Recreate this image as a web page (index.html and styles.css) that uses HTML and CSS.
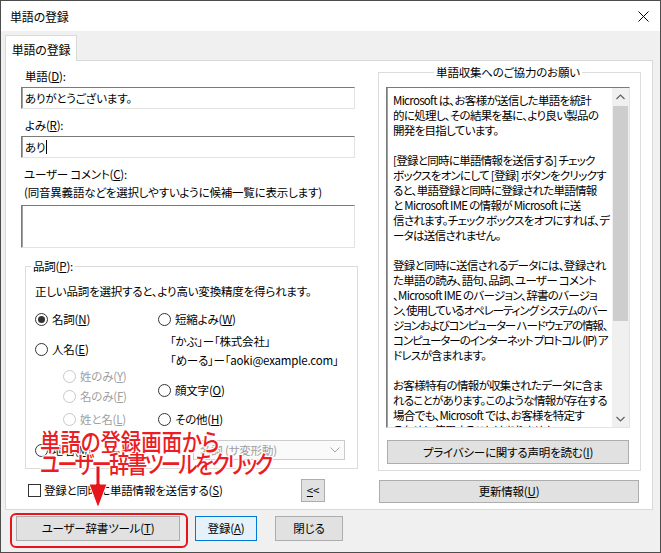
FILE: index.html
```html
<!DOCTYPE html>
<html lang="ja">
<head>
<meta charset="utf-8">
<title>単語の登録</title>
<link rel="stylesheet" href="styles.css">
</head>
<body>
<div class="window">
  <div class="titlebar">
    <span class="title">単語の登録</span>
    <svg class="close" width="11" height="11" viewBox="0 0 11 11"><path d="M0.5 0.5L10.5 10.5M10.5 0.5L0.5 10.5" stroke="#000" stroke-width="1" fill="none"/></svg>
  </div>
  <div class="client">
    <div class="tabs"><div class="tab">単語の登録</div></div>
    <div class="panel">
      <div class="left">
        <div class="label first">単語(<u>D</u>):</div>
        <div class="sunken input">ありがとうございます。</div>
        <div class="label">よみ(<u>R</u>):</div>
        <div class="sunken input">あり<span class="caret"></span></div>
        <div class="comment-label">ユーザー コメント(<u>C</u>):<br>(同音異義語などを選択しやすいように候補一覧に表示します)</div>
        <div class="sunken textarea"></div>
        <fieldset class="group pos">
          <legend class="legend-left">品詞(<u>P</u>):</legend>
          <div class="hint">正しい品詞を選択すると、より高い変換精度を得られます。</div>
          <div class="pos-grid">
            <div class="col">
              <div class="radio"><span class="circle checked"></span><span>名詞(<u>N</u>)</span></div>
              <div class="radio gap10"><span class="circle"></span><span>人名(<u>E</u>)</span></div>
              <div class="radio sub disabled gap7"><span class="circle"></span><span>姓のみ(<u>Y</u>)</span></div>
              <div class="radio sub disabled"><span class="circle"></span><span>名のみ(<u>F</u>)</span></div>
              <div class="radio sub disabled gap3"><span class="circle"></span><span>姓と名(<u>L</u>)</span></div>
            </div>
            <div class="col">
              <div class="radio"><span class="circle"></span><span>短縮よみ(<u>W</u>)</span></div>
              <div class="examples">「かぶ」ー「株式会社」<br>「めーる」ー「aoki@example.com」</div>
              <div class="radio gap10"><span class="circle"></span><span>顔文字(<u>O</u>)</span></div>
              <div class="radio gap9"><span class="circle"></span><span>その他(<u>H</u>)</span></div>
            </div>
            <div class="col row-last">
              <div class="radio"><span class="circle"></span><span>地名(<u>M</u>)</span></div>
            </div>
            <div class="col row-last">
              <div class="select">
                <span>名詞 (サ変形動)</span>
                <svg width="10" height="6" viewBox="0 0 10 6"><path d="M0.5 0.5L5 5L9.5 0.5" stroke="#a8a8a8" fill="none"/></svg>
              </div>
            </div>
          </div>
        </fieldset>
        <div class="send-row">
          <span class="checkbox"></span>
          <span class="send-label">登録と同時に単語情報を送信する(<u>S</u>)</span>
          <button class="btn small"><u>&lt;</u>&lt;</button>
        </div>
      </div>
      <div class="right">
        <fieldset class="group info">
          <legend class="legend-center">単語収集へのご協力のお願い</legend>
          <div class="sunken infobox">
            <div class="infotext">Microsoft は、お客様が送信した単語を統計<br>的に処理し、その結果を基に、より良い製品の<br>開発を目指しています。<br><br>[登録と同時に単語情報を送信する] チェック<br>ボックスをオンにして [登録] ボタンをクリックす<br>ると、単語登録と同時に登録された単語情報<br>と Microsoft IME の情報が Microsoft に送<br>信されます。チェック ボックスをオフにすれば、デ<br>ータは送信されません。<br><br>登録と同時に送信されるデータには、登録され<br>た単語の読み、語句、品詞、ユーザー コメント<br>、Microsoft IME のバージョン、辞書のバージョ<br><span class="tight">ン、使用しているオペレーティング システムのバー</span><br><span class="tight">ジョンおよびコンピューター ハードウェアの情報、</span><br><span class="tight">コンピューターのインターネット プロトコル (IP) ア</span><br>ドレスが含まれます。<br><br>お客様特有の情報が収集されたデータに含ま<br>れることがあります。このような情報が存在する<br>場合でも、Microsoft では、お客様を特定す<br>るために使用することはありません。</div>
            <div class="scrollbar">
              <div class="arrow"><svg width="9" height="6" viewBox="0 0 9 6"><path d="M0.5 5L4.5 1L8.5 5" stroke="#606060" stroke-width="1.2" fill="none"/></svg></div>
              <div class="track"><div class="thumb"></div></div>
              <div class="arrow"><svg width="9" height="6" viewBox="0 0 9 6"><path d="M0.5 1L4.5 5L8.5 1" stroke="#606060" stroke-width="1.2" fill="none"/></svg></div>
            </div>
          </div>
          <button class="btn privacy">プライバシーに関する声明を読む(<u>I</u>)</button>
        </fieldset>
        <button class="btn update">更新情報(<u>U</u>)</button>
      </div>
    </div>
    <div class="footer">
      <button class="btn foot tool">ユーザー辞書ツール(<u>T</u>)</button>
      <button class="btn foot default">登録(<u>A</u>)</button>
      <button class="btn foot close-btn">閉じる</button>
    </div>
  </div>

  <div class="note">単語の登録画面から<br><span class="note-2">ユーザー辞書ツールをクリック</span></div>
  <svg class="note-arrow" width="24" height="46" viewBox="0 0 24 46"><path d="M8 1H12V19H19L10 43L1 19H8Z" fill="#e8141b" stroke="#fff" stroke-width="1"/></svg>
  <div class="note-box"></div>
</div>
</body>
</html>
```

FILE: styles.css
```css
* { box-sizing: border-box; }
html, body { margin: 0; padding: 0; }
body {
  width: 661px;
  height: 553px;
  overflow: hidden;
  background: #fff;
  color: #000;
  font-family: "Noto Sans CJK JP", "Noto Sans CJK SC", sans-serif;
  font-size: 11.5px;
  letter-spacing: -0.2px;
  line-height: 15px;
  font-feature-settings: "palt";
}
u { text-decoration: underline; text-underline-offset: 1px; }

.window {
  position: relative;
  width: 661px;
  height: 553px;
  border: 1px solid #4d4d4d;
  background: #f0f0f0;
  display: flex;
  flex-direction: column;
  overflow: hidden;
}
.titlebar {
  flex: none;
  height: 30px;
  background: #fff;
  display: flex;
  align-items: center;
  justify-content: space-between;
  padding: 0 11px 0 9px;
}
.title { font-size: 12px; }
.client {
  flex: 1;
  padding: 4px 7px 0 4px;
  display: flex;
  flex-direction: column;
}
.tabs { display: flex; height: 26px; position: relative; z-index: 1; margin-bottom: -1px; }
.tab {
  width: 72px;
  height: 26px;
  background: #fff;
  border: 1px solid #d9d9d9;
  border-bottom: none;
  display: flex;
  align-items: center;
  justify-content: center;
  padding-top: 1px;
  font-size: 12px;
}
.panel {
  height: 450px;
  background: #fff;
  border: 1px solid #d9d9d9;
  display: flex;
  padding: 0 10px 0 15px;
}
.left { width: 337px; display: flex; flex-direction: column; }
.right { width: 263px; margin-left: 20px; display: flex; flex-direction: column; }

.label { margin-top: 9px; padding-left: 4px; }
.label.first { margin-top: 8px; }
.sunken {
  background: #fff;
  border-style: solid;
  border-width: 1px;
  border-color: #7a7a7a #e3e3e3 #e3e3e3 #7a7a7a;
  box-shadow: inset 1px 0 0 #a0a0a0;
}
.input {
  width: 334px;
  height: 22px;
  margin-top: 3px;
  padding: 3px 3px 0 3px;
}
.caret { display: inline-block; width: 1px; height: 14px; background: #000; vertical-align: -2px; margin-left: 1px; }
.comment-label { margin-top: 7px; line-height: 18px; padding-left: 3px; }
.textarea { width: 334px; height: 43px; margin-top: 4px; }

.group {
  margin: 0;
  border: 1px solid #dcdcdc;
  min-width: 0;
}
.group legend { padding: 0 2px; line-height: 15px; }
.legend-left { margin-left: -4px; }
.legend-center { margin: 0 auto; padding: 0 3px; }

.pos {
  margin: 11px 0 0 4px;
  width: 333px;
  padding: 10px 8px 8px 9px;
}
.pos-grid {
  margin-top: 10px;
  display: grid;
  grid-template-columns: 123px 1fr;
}
.col { display: flex; flex-direction: column; }
.row-last { margin-top: 11px; }
.radio { height: 20px; display: flex; align-items: center; gap: 4px; white-space: nowrap; }
.gap10 { margin-top: 10px; }
.gap9 { margin-top: 9px; }
.gap7 { margin-top: 7px; }
.gap3 { margin-top: 3px; }
.circle {
  width: 13px;
  height: 13px;
  border: 1px solid #333;
  border-radius: 50%;
  background: #fff;
  display: flex;
  align-items: center;
  justify-content: center;
  flex: none;
}
.circle.checked::after {
  content: "";
  width: 7px;
  height: 7px;
  border-radius: 50%;
  background: #333;
}
.sub { margin-left: 28px; }
.disabled { color: #a0a0a0; }
.disabled .circle { border-color: #c8c8c8; }
.examples { margin-top: 3px; padding-left: 12px; line-height: 19px; white-space: nowrap; }
.select {
  margin-left: 35px;
  width: 152px;
  height: 20px;
  border: 1px solid #cccccc;
  background: #fafafa;
  color: #a0a0a0;
  display: flex;
  align-items: center;
  justify-content: space-between;
  padding: 0 4px 0 6px;
}

.send-row {
  margin-top: 10px;
  height: 23px;
  display: flex;
  align-items: center;
}
.checkbox {
  width: 13px;
  height: 13px;
  border: 1px solid #333;
  background: #fff;
  margin-left: 7px;
  flex: none;
}
.send-label { margin-left: 3px; }
.btn {
  font: inherit;
  letter-spacing: inherit;
  font-feature-settings: "palt";
  color: #000;
  background: #e1e1e1;
  border: 1px solid #adadad;
  padding: 0;
  margin: 0;
  display: flex;
  align-items: center;
  justify-content: center;
}
.small { width: 24px; height: 23px; margin-left: auto; margin-right: 33px; }

.info { margin-top: 4px; padding: 7px 10px 6px 7px; }
.infobox {
  height: 341px;
  display: flex;
  overflow: hidden;
}
.infotext {
  flex: 1;
  padding: 5px 0 0 6px;
  white-space: nowrap;
  overflow: hidden;
  line-height: 15px;
  letter-spacing: -0.7px;
}
.tight { letter-spacing: -1.1px; }
.scrollbar {
  width: 17px;
  flex: none;
  background: #f0f0f0;
  display: flex;
  flex-direction: column;
}
.arrow { height: 17px; display: flex; align-items: center; justify-content: center; }
.track { flex: 1; display: flex; flex-direction: column; padding: 1px 1px 0 1px; }
.thumb { height: 215px; background: #cdcdcd; }
.privacy { margin: 12px 0 0 1px; width: 242px; height: 24px; }
.update { margin: 9px 0 0 1px; width: 260px; height: 23px; }

.footer {
  display: flex;
  padding: 6px 0 0 11px;
}
.foot { height: 25px; }
.tool { width: 164px; }
.default { width: 62px; margin-left: 15px; background: #e5f1fb; border-color: #0078d7; }
.close-btn { width: 68px; margin-left: 18px; }

.note {
  position: absolute;
  left: 39px;
  top: 429px;
  color: #ec1c24;
  font-size: 24px;
  line-height: 22px;
  letter-spacing: 0;
  font-weight: 500;
  white-space: nowrap;
  transform: scaleX(0.85);
  transform-origin: 0 0;
  text-shadow: 1px 1px 0 #fff, -1px -1px 0 #fff, 1px -1px 0 #fff, -1px 1px 0 #fff, 0 0 2px #fff;
}
.note-2 { letter-spacing: -3px; }
.note-arrow { position: absolute; left: 87px; top: 464px; }
.note-box {
  position: absolute;
  left: 9px;
  top: 512px;
  width: 178px;
  height: 35px;
  border: 2px solid #e8141b;
  border-radius: 6px;
}
```
